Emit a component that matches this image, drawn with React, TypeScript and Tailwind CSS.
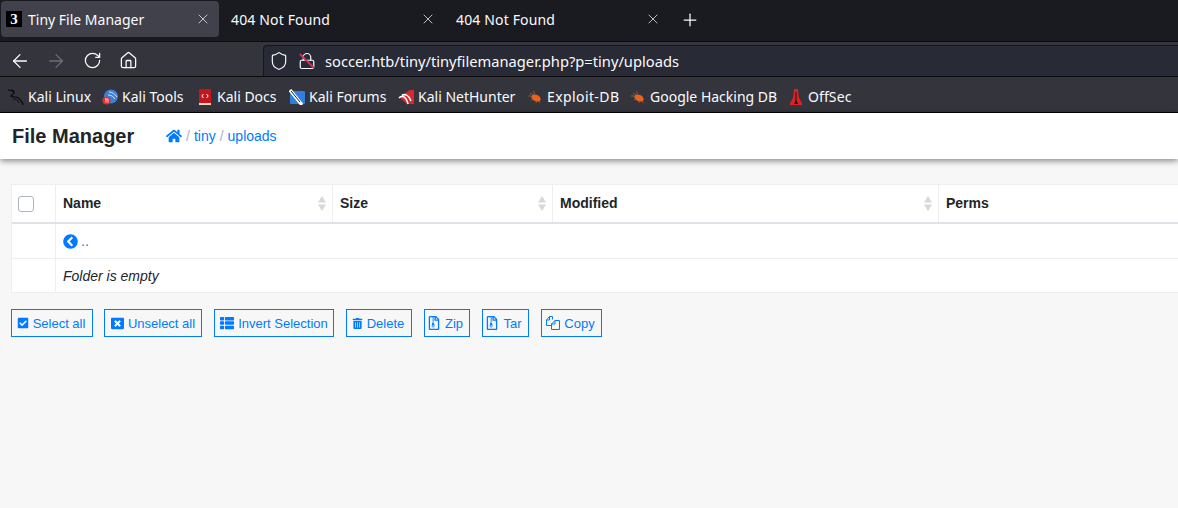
import { ArrowLeft, ArrowRight, House, Lock, Plus, RotateCw, Shield, X } from "lucide-react";
import { FaCheckSquare, FaChevronCircleLeft, FaHome, FaRegFileArchive, FaThList, FaTrashAlt, FaWindowClose } from "react-icons/fa";
import type { ReactNode } from "react";

function Tab({ title, active, icon, className }: { title: string; active?: boolean; icon?: ReactNode; className: string }) {
  return (
    <div className={`flex items-center h-[36px] rounded-[4px] pr-[8px] ${className} ${active ? "bg-[#40414a]" : ""}`}>
      {icon}
      <span className={`flex-1 text-[#fbfbfe] whitespace-nowrap ${active ? "" : "tracking-[0.15px]"}`}>{title}</span>
      <X size={16} strokeWidth={1.2} className="text-[#e6e6ea]" />
    </div>
  );
}

function Bookmark({ icon, label, className }: { icon: ReactNode; label: string; className: string }) {
  return (
    <div className={`flex items-center gap-[4px] whitespace-nowrap ${className}`}>
      {icon}
      <span>{label}</span>
    </div>
  );
}

const KaliIcon = (
  <svg width="16" height="16" viewBox="0 0 16 16" fill="none" stroke="#08080a" strokeWidth="1.2">
    <path d="M0 1c3 0 5 1 6 2 1 2-2 2-3 4 0 1 2 1 4 1 3 0 5 2 6 4 1 1 2 2 2 4" />
    <path d="M4 0 6 2M5 10c3 0 5 1 6 4" strokeWidth="0.8" />
  </svg>
);

const ToolsIcon = (
  <svg width="16" height="16" viewBox="0 0 16 16">
    <circle cx="9" cy="7.5" r="7" fill="#3b7fdc" />
    <path d="M7 3c3 0 6 2 8 5M6 6c3 0 5 1 7 4" stroke="#cfe3fa" strokeWidth="1" fill="none" />
    <circle cx="4.5" cy="11.5" r="4" fill="#e2312d" />
    <path d="M3 10h3M4 10v3.5M6 10v3.5" stroke="#fff" strokeWidth="0.8" />
  </svg>
);

const DocsIcon = (
  <svg width="16" height="16" viewBox="0 0 16 16">
    <rect x="2" y="0" width="12" height="14" fill="#c4161c" />
    <rect x="2" y="14" width="12" height="2" fill="#e8dcc0" />
    <path d="M6.5 5 4.8 7l1.7 2M9.5 5l1.7 2-1.7 2" stroke="#fff" strokeWidth="1" fill="none" />
  </svg>
);

const ForumsIcon = (
  <svg width="16" height="16" viewBox="0 0 16 16">
    <rect x="1" y="2" width="15" height="13" rx="1" fill="#2f7fe0" />
    <path d="M1 1 13 16" stroke="#fff" strokeWidth="3.4" />
    <path d="M2 2 11 13" stroke="#20242c" strokeWidth="1" />
  </svg>
);

const HunterIcon = (
  <svg width="16" height="16" viewBox="0 0 16 16">
    <path d="M1 8 12 1h4v14H9z" fill="#d9282f" />
    <path d="M1 9c3-3 7-2 9 6M4 6c3-1 7 0 9 6" stroke="#fff" strokeWidth="1.6" fill="none" />
  </svg>
);

const BugIcon = (
  <svg width="16" height="16" viewBox="0 0 16 16">
    <ellipse cx="9" cy="9" rx="5" ry="3.2" transform="rotate(25 9 9)" fill="#e8631c" />
    <path d="M1 7h3M3 4l3 2M6 2l2 3M4 11l2-1M9 14l1-2M13 14l-1-2" stroke="#8a5a3a" strokeWidth="1" />
  </svg>
);

const OffSecIcon = (
  <svg width="16" height="16" viewBox="0 0 16 16">
    <path d="M6 0h4v1l1 8 3 5v2H2v-2l3-5 1-8z" fill="#d8232a" />
    <path d="M7.5 3h1v8l1.5 4h-4l1.5-4z" fill="#3a0a0c" />
  </svg>
);

const FilesIcon = (
  <svg width="14" height="14" viewBox="0 0 14 14" fill="none" stroke="currentColor" strokeWidth="1">
    <path d="M5 9.5H.5V4L3.5.5h3v3" />
    <path d="M.5 4h3V.5" />
    <path d="M5.5 13.5h8V4.5H9l-3.5 3.5z" />
    <path d="M5.5 8H9V4.5" />
  </svg>
);

const sortArrows = (
  <svg width="8" height="15" viewBox="0 0 8 15" className="absolute right-[6px] top-[11px]" fill="#d8d8d8">
    <path d="M4 0 8 6.5H0z" />
    <path d="M4 15 0 8.5h8z" />
  </svg>
);

function Th({ label, width }: { label: string; width: string }) {
  return (
    <div className={`relative flex items-center pl-[7px] border-r border-[#eceef0] ${width}`}>
      <span className="font-bold text-[#212529]">{label}</span>
      {sortArrows}
    </div>
  );
}

function ActionButton({ icon, label, className }: { icon: ReactNode; label: string; className: string }) {
  return (
    <div className={`flex items-center justify-center gap-[4px] h-[28px] border border-[#007bff] text-[13px] text-[#007bff] whitespace-nowrap ${className}`}>
      {icon}
      <span className="pt-px">{label}</span>
    </div>
  );
}

export default function App() {
  return (
    <div className="w-[1178px] h-[508px] overflow-hidden flex flex-col bg-[#f7f7f7] font-['Liberation_Sans',sans-serif] text-[14px]">
      <div className="font-['Noto_Sans',sans-serif] text-[14px] shrink-0">
        {/* tabs */}
        <div className="h-[41px] bg-[#1a1b20] flex items-start pt-px pl-px">
          <Tab
            className="w-[218px] pl-[5px]"
            active
            title="Tiny File Manager"
            icon={
              <span className="w-[16px] h-[16px] mr-[6px] bg-black text-white font-bold text-[15px] leading-[16px] text-center font-['Liberation_Serif',serif]">3</span>
            }
          />
          <Tab className="w-[224px] ml-[1px] pl-[11px]" title="404 Not Found" />
          <Tab className="w-[225px] pl-[12px]" title="404 Not Found" />
          <Plus size={20} strokeWidth={1.5} className="text-[#fbfbfe] ml-[11px] mt-[9px]" />
        </div>
        {/* nav */}
        <div className="h-[35px] bg-[#33343c] flex pt-[3px] border-t border-[#0c0c0d]">
          <div className="flex items-center text-[#fbfbfe] pl-[2px] w-[263px]">
            <span className="w-[36px] flex justify-center"><ArrowLeft size={22} strokeWidth={1.4} /></span>
            <span className="w-[36px] flex justify-center"><ArrowRight size={22} strokeWidth={1.4} className="text-[#6e6d75]" /></span>
            <span className="w-[36px] flex justify-center"><RotateCw size={19} strokeWidth={1.6} /></span>
            <span className="w-[36px] flex justify-center"><House size={19} strokeWidth={1.6} /></span>
          </div>
          <div className="flex-1 bg-[#282a35] border border-b-0 border-r-0 border-[#16161c] rounded-tl-[4px] flex items-center pl-[5px] text-[#fbfbfe]">
            <Shield size={20} strokeWidth={1.4} />
            <span className="relative ml-[9px] w-[18px]">
              <Lock size={18} strokeWidth={1.6} />
              <span className="absolute left-[-1px] top-[8px] w-[20px] h-[1.5px] bg-[#e22850] rotate-45" />
            </span>
            <span className="ml-[9px] text-[14.7px]">soccer.htb/tiny/tinyfilemanager.php?p=tiny/uploads</span>
          </div>
        </div>
        {/* bookmarks */}
        <div className="h-[36px] bg-[#33343c] border-t border-[#0c0c0d] flex items-center pt-[4px] pl-[8px] text-[#fbfbfe]">
          <Bookmark className="w-[94px]" icon={KaliIcon} label="Kali Linux" />
          <Bookmark className="w-[95px]" icon={ToolsIcon} label="Kali Tools" />
          <Bookmark className="w-[92px]" icon={DocsIcon} label="Kali Docs" />
          <Bookmark className="w-[109px]" icon={ForumsIcon} label="Kali Forums" />
          <Bookmark className="w-[129px]" icon={HunterIcon} label="Kali NetHunter" />
          <Bookmark className="w-[103px] tracking-[0.4px]" icon={BugIcon} label="Exploit-DB" />
          <Bookmark className="w-[158px]" icon={BugIcon} label="Google Hacking DB" />
          <Bookmark className="tracking-[0.1px]" icon={OffSecIcon} label="OffSec" />
        </div>
      </div>

      {/* navbar */}
      <div className="h-[47px] bg-white border-t border-black shadow-[0_2px_6px_rgba(0,0,0,0.45)] flex items-center pl-[12px] shrink-0 relative">
        <span className="text-[20px] font-bold text-[#212529] w-[154px]">File Manager</span>
        <FaHome size={16} className="text-[#007bff]" />
        <span className="text-[#aab4be] mx-[4px]">/</span>
        <span className="text-[#007bff]">tiny</span>
        <span className="text-[#aab4be] mx-[4px]">/</span>
        <span className="text-[#007bff]">uploads</span>
      </div>

      {/* table */}
      <div className="ml-[11px] mt-[25px] bg-white border border-[#eceef0] border-r-0 flex flex-col">
        <div className="h-[37px] flex">
          <div className="w-[44px] flex items-center pl-[6px] border-r border-[#eceef0]">
            <span className="w-[16px] h-[16px] rounded-[3px] border border-[#adb5bd] bg-white" />
          </div>
          <Th label="Name" width="w-[277px]" />
          <Th label="Size" width="w-[220px]" />
          <Th label="Modified" width="w-[386px]" />
          <div className="flex items-center pl-[7px]">
            <span className="font-bold text-[#212529]">Perms</span>
          </div>
        </div>
        <div className="h-[36px] flex border-t-2 border-[#dee2e6]">
          <div className="w-[44px] border-r border-[#eceef0]" />
          <div className="flex items-center pl-[7px] gap-[3px] text-[#007bff]">
            <FaChevronCircleLeft size={15} />
            <span>..</span>
          </div>
        </div>
        <div className="h-[34px] flex border-t border-[#eceef0]">
          <div className="w-[44px] border-r border-[#eceef0]" />
          <div className="flex items-center pl-[7px] pt-[2px] italic text-[#212529]">Folder is empty</div>
        </div>
      </div>

      {/* actions */}
      <div className="flex ml-[11px] mt-[16px] gap-[11px]">
        <ActionButton className="w-[82px] pr-[2px]" icon={<FaCheckSquare size={12} />} label="Select all" />
        <ActionButton className="w-[98px]" icon={<FaWindowClose size={13} />} label="Unselect all" />
        <ActionButton className="w-[120px] ml-[1px]" icon={<FaThList size={14} />} label="Invert Selection" />
        <ActionButton className="w-[66px] ml-[1px] pr-[2px]" icon={<FaTrashAlt size={11} />} label="Delete" />
        <ActionButton className="w-[46px] ml-[1px] pr-[4px]" icon={<FaRegFileArchive size={14} />} label="Zip" />
        <ActionButton className="w-[47px] ml-[1px] pr-[4px]" icon={<FaRegFileArchive size={14} />} label="Tar" />
        <ActionButton className="w-[61px] ml-[1px] pr-[2px]" icon={FilesIcon} label="Copy" />
      </div>
    </div>
  );
}
